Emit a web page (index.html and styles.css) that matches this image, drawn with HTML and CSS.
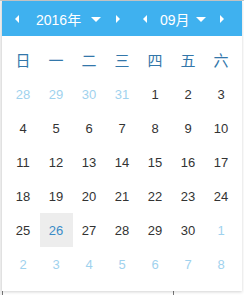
FILE: index.html
```html
<!DOCTYPE html>
<html lang="zh-CN">
<head>
    <meta charset="UTF-8">
    <meta name="viewport" content="width=device-width, initial-scale=1.0">
    <title>日期选择</title>
    <link rel="stylesheet" href="styles.css">
</head>
<body>
    <div class="fields">
        <div class="field field-date"></div>
        <div class="field field-time"></div>
    </div>

    <div class="picker">
        <div class="picker-head">
            <div class="nav nav-year">
                <span class="arrow arrow-left"></span>
                <span class="label">2016年</span>
                <span class="caret"></span>
                <span class="arrow arrow-right"></span>
            </div>
            <div class="nav nav-month">
                <span class="arrow arrow-left"></span>
                <span class="label">09月</span>
                <span class="caret"></span>
                <span class="arrow arrow-right"></span>
            </div>
        </div>

        <div class="grid weekdays">
            <span>日</span><span>一</span><span>二</span><span>三</span><span>四</span><span>五</span><span>六</span>
        </div>

        <div class="grid days" id="days"></div>
    </div>

    <script>
        const days = document.getElementById('days');
        const cells = [];

        // previous month tail
        [28, 29, 30, 31].forEach(d => cells.push({ d, other: true }));
        for (let d = 1; d <= 30; d++) cells.push({ d, selected: d === 26 });
        // next month head
        for (let d = 1; d <= 8; d++) cells.push({ d, other: true });

        cells.forEach(c => {
            const el = document.createElement('span');
            el.className = 'day';
            if (c.other) el.classList.add('other');
            if (c.selected) el.classList.add('selected');
            el.textContent = c.d;
            days.appendChild(el);
        });
    </script>
</body>
</html>
```

FILE: styles.css
```css
body {
    margin: 0;
    background-color: #f2f2f2;
    font-family: 'Liberation Sans', 'Noto Sans CJK SC', sans-serif;
    height: 295px;
    overflow: hidden;
    position: relative;
}
.fields {
    display: flex;
    height: 295px;
    border-top: 1px solid #c8c8c8;
    box-sizing: border-box;
}
.field {
    background-color: #fff;
    border-left: 1px solid #777;
}
.field-date {
    margin-left: 2px;
    width: 170px;
}
.field-time {
    flex: 1;
}
.picker {
    position: absolute;
    top: 1px;
    left: 2px;
    width: 240px;
    height: 290px;
    background-color: #fff;
    box-shadow: 0 1px 3px rgba(0,0,0,0.18);
}
.picker-head {
    display: flex;
    height: 35px;
    background-color: #3fb1ef;
    color: #fff;
}
.nav {
    width: 120px;
    box-sizing: border-box;
    display: flex;
    align-items: center;
    font-size: 14px;
    white-space: nowrap;
}
.nav > span {
    flex-shrink: 0;
}
.nav-year {
    padding-left: 13px;
}
.nav-month {
    padding-left: 21px;
}
.arrow {
    width: 0;
    height: 0;
    border-top: 4px solid transparent;
    border-bottom: 4px solid transparent;
}
.arrow-left {
    border-right: 4px solid #fff;
}
.arrow-right {
    border-left: 4px solid #fff;
}
.caret {
    width: 0;
    height: 0;
    border-left: 5px solid transparent;
    border-right: 5px solid transparent;
    border-top: 5px solid #fff;
    margin-top: 1px;
}
.nav-year .label {
    margin-left: 17px;
    margin-right: 10px;
}
.nav-year .caret {
    margin-right: 15px;
}
.nav-month .label {
    margin-left: 13px;
    margin-right: 6px;
}
.nav-month .caret {
    margin-right: 14px;
}
.grid {
    display: grid;
    grid-template-columns: repeat(7, 33px);
    justify-content: center;
}
.weekdays {
    margin-top: 5px;
    grid-auto-rows: 36px;
    font-size: 15px;
    color: #3377aa;
    font-family: 'Noto Sans CJK SC', sans-serif;
}
.weekdays span, .day {
    display: flex;
    align-items: center;
    justify-content: center;
}
.days {
    grid-auto-rows: 34px;
    font-size: 13px;
    color: #333;
}
.day.other {
    color: #9fd2ee;
}
.day.selected {
    background-color: #ededed;
    color: #3a8bc7;
}
```
